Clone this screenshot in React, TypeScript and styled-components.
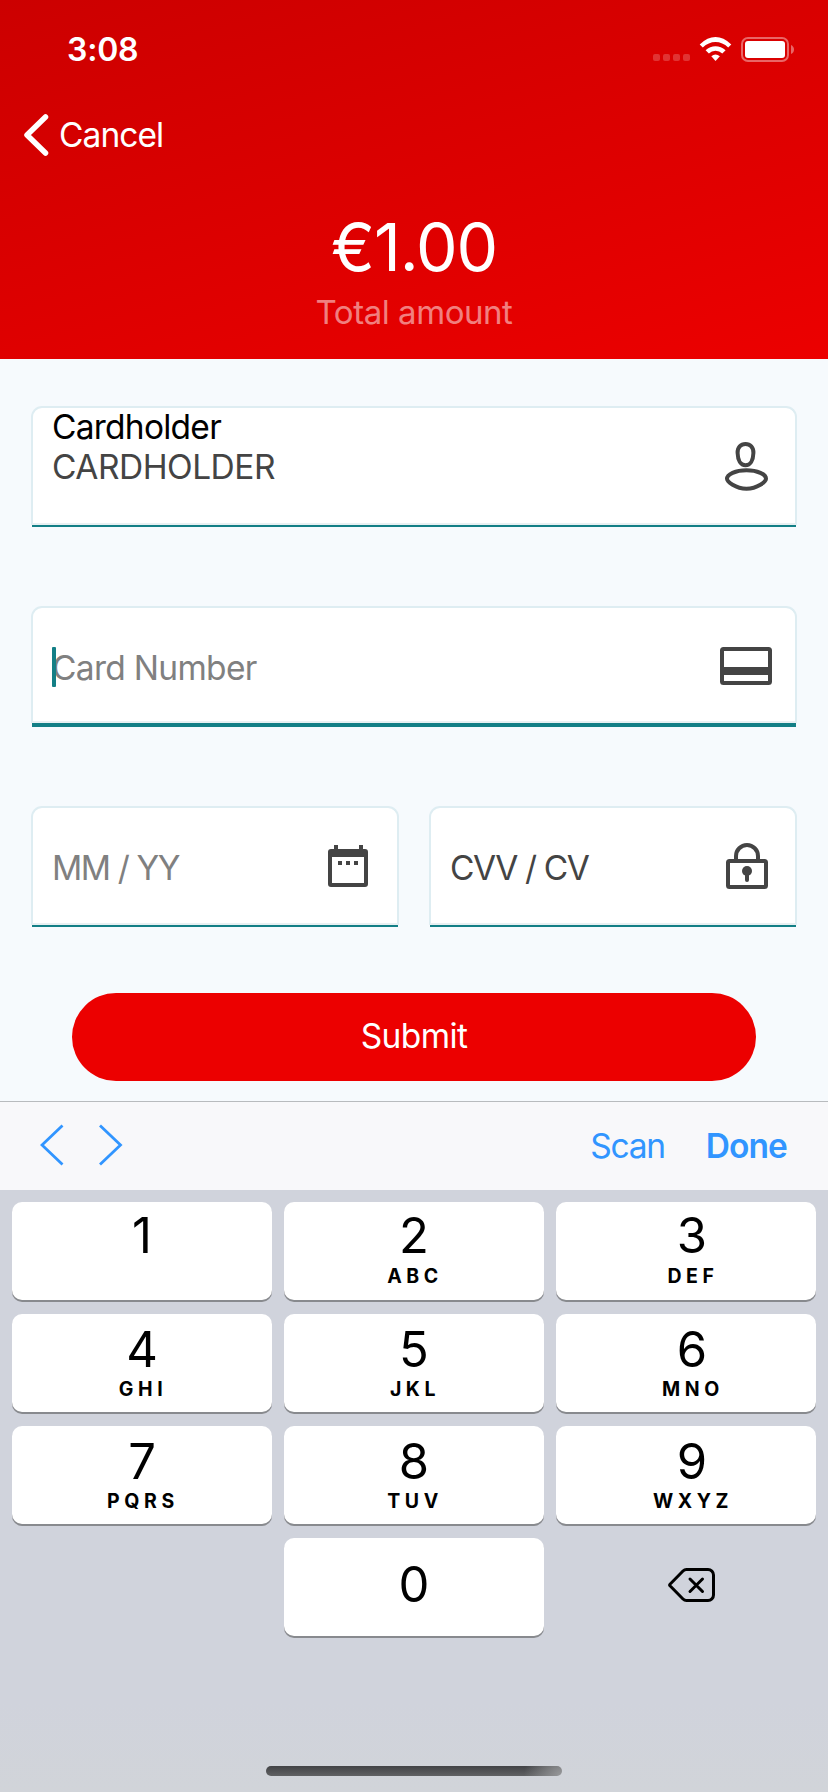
import React from "react";
import styled, { createGlobalStyle } from "styled-components";

const GlobalStyle = createGlobalStyle`
  * { box-sizing: border-box; }
  body { margin: 0; background: #f6fafd; }
  button { border: 0; padding: 0; background: none; font: inherit; color: inherit; }
`;

const Screen = styled.div`
  width: 828px;
  height: 1792px;
  display: flex;
  flex-direction: column;
  overflow: hidden;
  background: #f6fafd;
  font-family: Inter, "Liberation Sans", sans-serif;
  font-size: 33.5px;
  line-height: 40px;
  letter-spacing: -0.8px;
  white-space: nowrap;
`;

const Header = styled.header`
  height: 359px;
  flex: none;
  display: flex;
  flex-direction: column;
  color: #fff;
  background: linear-gradient(164deg, #cc0000, #ec0000);
`;

const StatusBar = styled.div`
  height: 88px;
  padding: 11px 34px 0 67px;
  display: flex;
  justify-content: space-between;
  align-items: center;
`;

const Clock = styled.span`
  font-size: 32px;
  font-weight: 600;
  letter-spacing: -0.2px;
`;

const StatusIcons = styled.svg`
  width: 141px;
  height: 25px;
`;

const BackButton = styled.button`
  height: 94px;
  padding-left: 24px;
  display: flex;
  align-items: center;
  gap: 10px;
  letter-spacing: -0.95px;
`;

const Amount = styled.div`
  height: 80px;
  margin-top: 25px;
  line-height: 80px;
  font-size: 66px;
  letter-spacing: -1.1px;
  text-align: center;
`;

const AmountLabel = styled.div`
  margin-top: 5px;
  text-align: center;
  font-size: 33px;
  letter-spacing: -0.45px;
  color: rgba(255, 255, 255, 0.5);
`;

const Form = styled.form`
  flex: none;
  height: 742px;
  padding: 47px 31px 0;
  display: flex;
  flex-direction: column;
`;

const FieldRow = styled.div`
  height: 200px;
  flex: none;
  display: grid;
  grid-auto-flow: column;
  grid-auto-columns: 1fr;
  gap: 30px;
  align-items: start;
`;

const Field = styled.div<{ $focused?: boolean }>`
  display: flex;
  flex-direction: column;
  &::after {
    content: "";
    height: ${(p) => (p.$focused ? 4 : 2)}px;
    margin: 0 1px;
    background: #137f86;
  }
`;

const FieldBox = styled.div<{ $focused?: boolean }>`
  height: ${(p) => (p.$focused ? 117 : 119)}px;
  display: flex;
  justify-content: space-between;
  padding-left: 19px;
  border: 2px solid #deedf2;
  border-bottom-color: #e8f0f2;
  border-radius: 11px 11px 0 0;
  background: #fff;
`;

const FieldText = styled.div<{ $top: number }>`
  margin-top: ${(p) => p.$top}px;
  display: flex;
  flex-direction: column;
`;

const Label = styled.label`
  color: #000;
  letter-spacing: -0.75px;
`;

const Value = styled.span<{ $placeholder?: boolean; $spacing?: number }>`
  position: relative;
  color: ${(p) => (p.$placeholder ? "#808080" : "#444")};
  letter-spacing: ${(p) => p.$spacing ?? -0.7}px;
`;

const Caret = styled.i`
  position: absolute;
  left: 0;
  top: -1px;
  width: 4px;
  height: 40px;
  border-radius: 1px;
  background: #137f86;
`;

const FieldIcon = styled.svg`
  width: 60px;
  height: 60px;
  margin: 28px 15px 0 0;
  fill: none;
  stroke: #444;
  stroke-width: 4;
`;

const SubmitButton = styled.button`
  && {
    height: 88px;
    margin: -13px 41px 0;
    flex: none;
    border-radius: 44px;
    background: #ec0000;
    color: #fff;
    font-size: 33.5px;
    letter-spacing: -0.6px;
    line-height: 84px;
    padding-bottom: 2px;
  }
`;

const Toolbar = styled.div`
  height: 89px;
  flex: none;
  display: flex;
  align-items: center;
  justify-content: space-between;
  padding: 0 41px 0 40px;
  border-top: 1px solid #b8bbbe;
  background: #f8f8fa;
  color: #3195ff;
`;

const NavArrows = styled.svg`
  width: 83px;
  height: 44px;
  margin-top: -3px;
`;

const ToolbarActions = styled.div`
  display: flex;
  gap: 41px;
`;

const Action = styled.button<{ $strong?: boolean }>`
  font-weight: ${(p) => (p.$strong ? 600 : 400)};
  letter-spacing: ${(p) => (p.$strong ? -0.9 : -1.3)}px;
`;

const Keyboard = styled.div`
  flex: 1;
  display: flex;
  flex-direction: column;
  justify-content: space-between;
  align-items: center;
  padding: 12px 12px 16px;
  background: linear-gradient(#d0d3dc 85%, #d1d4d9);
`;

const Keys = styled.div`
  width: 100%;
  display: grid;
  grid-template-columns: repeat(3, 1fr);
  grid-auto-rows: 98px;
  gap: 14px 12px;
`;

const Key = styled.button<{ $blank?: boolean; $top: number }>`
  && {
    display: flex;
    flex-direction: column;
    align-items: center;
    padding-top: ${(p) => p.$top}px;
    border-radius: 10px;
    color: #000;
    background: ${(p) => (p.$blank ? "transparent" : "#fff")};
    box-shadow: ${(p) => (p.$blank ? "none" : "0 2px 0 #888a8e")};
  }
  &&:nth-child(3n) {
    padding-left: 12px;
  }
`;

const Digit = styled.span`
  height: 50px;
  line-height: 50px;
  font-size: 49px;
  letter-spacing: 0;
`;

const Letters = styled.span`
  margin-top: 2.5px;
  height: 24px;
  line-height: 24px;
  font-size: 19.5px;
  font-weight: 650;
  letter-spacing: 4.6px;
  padding-left: 2px;
`;

const HomeIndicator = styled.div`
  width: 296px;
  height: 10px;
  border-radius: 5px;
  background: radial-gradient(circle at 100% 100%, #98999b, transparent 38px),
    linear-gradient(#424346, #606163);
`;

const PersonIcon = () => (
  <FieldIcon viewBox="0 0 60 60">
    <path d="M25.5 8C30.3 8 33.6 11.5 33.4 17C33.2 24.5 30.3 29.2 25.5 29.2C20.7 29.2 17.8 24.5 17.6 17C17.4 11.5 20.7 8 25.5 8Z" />
    <path d="M26.5 34.2C15.5 34.2 7 38.3 7 42.8C7 45.5 15.5 52.7 26.5 52.7C37.5 52.7 46 45.5 46 42.8C46 38.3 37.5 34.2 26.5 34.2Z" />
  </FieldIcon>
);

const CardIcon = () => (
  <FieldIcon viewBox="0 0 60 60">
    <rect x="2" y="13" width="48" height="34" rx="1.5" />
    <path d="M2 35H50" strokeWidth="8" />
  </FieldIcon>
);

const CalendarIcon = () => (
  <FieldIcon viewBox="0 0 60 60">
    <path
      d="M12 9h4v4h21v-4h4v4h2a3 3 0 0 1 3 3v32a3 3 0 0 1-3 3H9a3 3 0 0 1-3-3V16a3 3 0 0 1 3-3h3zM10 21v26h32V21zM16 25h4v4h-4zM24 25h4v4h-4zM32 25h4v4h-4z"
      fill="#444"
      fillRule="evenodd"
      stroke="none"
    />
  </FieldIcon>
);

const LockIcon = () => (
  <FieldIcon viewBox="0 0 60 60">
    <rect x="8" y="25" width="38" height="26" rx="1.5" />
    <path d="M16 25V20a11 11 0 0 1 22 0V25" />
    <circle cx="27" cy="35" r="5" fill="#444" stroke="none" />
    <path d="M27 36V44" strokeLinecap="round" />
  </FieldIcon>
);

const KEYS: [string, string][] = [
  ["1", ""],
  ["2", "ABC"],
  ["3", "DEF"],
  ["4", "GHI"],
  ["5", "JKL"],
  ["6", "MNO"],
  ["7", "PQRS"],
  ["8", "TUV"],
  ["9", "WXYZ"],
];

export default function App() {
  return (
    <Screen>
      <GlobalStyle />
      <Header>
        <StatusBar>
          <Clock>3:08</Clock>
          <StatusIcons viewBox="0 0 141 25" fill="#fff">
            <g opacity="0.2">
              <rect x="0" y="17" width="7" height="7" rx="2" />
              <rect x="10" y="17" width="7" height="7" rx="2" />
              <rect x="20" y="17" width="7" height="7" rx="2" />
              <rect x="30" y="17" width="7" height="7" rx="2" />
            </g>
            <path d="M46.700 7.400Q54.500 0 62.500 0T78.300 7.400L75.200 10.500Q69.500 5 62.500 5T49.800 10.500Z" />
            <path d="M52.600 13.200Q57 9.200 62.500 9.200T72.600 13.200L69.300 16.400Q66.500 13.800 62.500 13.800T55.900 16.400Z" />
            <path d="M58.300 19.200Q60.300 17.600 62.500 17.600T66.900 19.200L62.500 24Z" />
            <rect x="89" y="1" width="46" height="23" rx="6" fill="none" stroke="#fff" strokeOpacity="0.4" strokeWidth="2" />
            <rect x="92" y="4" width="40" height="17" rx="3" />
            <path d="M138 8Q141 9.500 141 12.500T138 17Z" opacity="0.4" />
          </StatusIcons>
        </StatusBar>
        <BackButton>
          <svg width="25" height="42" viewBox="0 0 25 42" fill="none" stroke="#fff" strokeWidth="5.500" strokeLinecap="round" strokeLinejoin="round">
            <path d="M21.500 3L3 21L21.500 39" />
          </svg>
          Cancel
        </BackButton>
        <Amount>€1.00</Amount>
        <AmountLabel>Total amount</AmountLabel>
      </Header>

      <Form>
        <FieldRow>
          <Field>
            <FieldBox>
              <FieldText $top={-1}>
                <Label>Cardholder</Label>
                <Value $spacing={-0.5}>CARDHOLDER</Value>
              </FieldText>
              <PersonIcon />
            </FieldBox>
          </Field>
        </FieldRow>
        <FieldRow>
          <Field $focused>
            <FieldBox $focused>
              <FieldText $top={40}>
                <Value $placeholder>
                  <Caret />
                  Card Number
                </Value>
              </FieldText>
              <CardIcon />
            </FieldBox>
          </Field>
        </FieldRow>
        <FieldRow>
          <Field>
            <FieldBox>
              <FieldText $top={40}>
                <Value $placeholder $spacing={-1.4}>MM / YY</Value>
              </FieldText>
              <CalendarIcon />
            </FieldBox>
          </Field>
          <Field>
            <FieldBox>
              <FieldText $top={40}>
                <Value $spacing={-1.4}>CVV / CV</Value>
              </FieldText>
              <LockIcon />
            </FieldBox>
          </Field>
        </FieldRow>
        <SubmitButton type="button">Submit</SubmitButton>
      </Form>

      <Toolbar>
        <NavArrows viewBox="0 0 83 44" fill="none" stroke="currentColor" strokeWidth="2.800">
          <path d="M22.500 2.500L2 22L22.500 41.500" />
          <path d="M60 2.500L80.500 22L60 41.500" />
        </NavArrows>
        <ToolbarActions>
          <Action>Scan</Action>
          <Action $strong>Done</Action>
        </ToolbarActions>
      </Toolbar>

      <Keyboard>
        <Keys>
          {KEYS.map(([digit, letters], i) => (
            <Key key={digit} $top={i < 3 ? 9 : 10.5}>
              <Digit>{digit}</Digit>
              <Letters>{letters}</Letters>
            </Key>
          ))}
          <Key as="span" $blank $top={0} />
          <Key $top={22}>
            <Digit>0</Digit>
          </Key>
          <Key $blank $top={30}>
            <svg width="48" height="34" viewBox="0 0 48 34" fill="none" stroke="#000" strokeWidth="3" strokeLinecap="round" strokeLinejoin="round">
              <path d="M18.500 1.500H40a5.500 5.500 0 0 1 5.500 5.500V27a5.500 5.500 0 0 1-5.500 5.500H18.500Q16.500 32.500 15 31L2 17.800Q1.300 17 2 16.200L15 3Q16.500 1.500 18.500 1.500Z" />
              <path d="M22 11L34.500 23.500M34.500 11L22 23.500" />
            </svg>
          </Key>
        </Keys>
        <HomeIndicator />
      </Keyboard>
    </Screen>
  );
}
